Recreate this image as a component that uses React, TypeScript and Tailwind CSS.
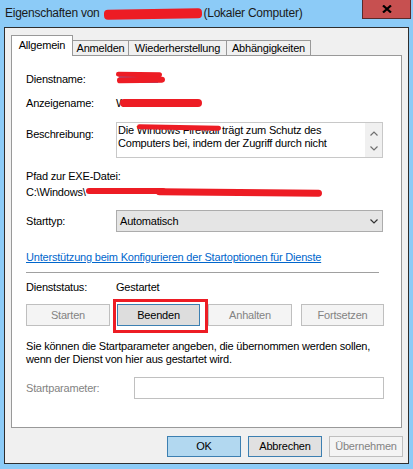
import React from 'react'

function Chevron({ up = false, className = '' }: { up?: boolean; className?: string }) {
  return (
    <svg width="8" height="5" viewBox="0 0 8 5" className={className}>
      <path d={up ? 'M0.5 4.5 L4 1 L7.5 4.5' : 'M0.5 0.5 L4 4 L7.5 0.5'} fill="none" stroke="currentColor" strokeWidth="1.2" />
    </svg>
  )
}

function Row({ label, children, className = '' }: { label: string; children?: React.ReactNode; className?: string }) {
  return (
    <div className={`flex items-center h-[16px] ${className}`}>
      <span className="w-[90px] shrink-0">{label}</span>
      {children}
    </div>
  )
}

export default function App() {
  return (
    <div className="w-[413px] h-[469px] bg-[#8ccbf7] overflow-hidden font-['Liberation_Sans',Arial,sans-serif] text-[11px] tracking-[-0.2px] leading-[13px] text-black">
      {/* Title bar */}
      <div className="flex h-[27px]">
        <div className="flex items-center h-[27px] pl-[5px] text-[12px] tracking-[-0.25px] text-[#1a1a1a]">
          <span>Eigenschaften von</span>
          <span className="relative inline-block w-[101px] h-[14px] ml-[3px]">
            <span className="absolute left-[1px] top-[2px] w-[98px] h-[10px] bg-[#ed1c24] rounded-[4px] -rotate-1" />
          </span>
          <span>(Lokaler Computer)</span>
        </div>
        <button className="ml-auto mr-[2px] w-[49px] h-[19px] bg-[#c75050] border border-[#5a2a2a] border-t-0 flex items-center justify-center">
          <svg width="10" height="8" viewBox="0 0 10 8">
            <path d="M1 0.5 L9 7.5 M9 0.5 L1 7.5" stroke="#000" strokeWidth="2.2" />
          </svg>
        </button>
      </div>

      {/* Client area */}
      <div className="mx-[4px] h-[437px] border border-[#2e2e2e] bg-[#f0f0f0] pl-[6px] pt-[7px]">
        {/* Tabs */}
        <div className="flex items-end h-[20px]">
          <div className="relative z-10 mb-[-1px] h-[21px] w-[62px] bg-white border border-b-0 border-[#999] flex items-center justify-center pb-[1px]">
            Allgemein
          </div>
          <div className="h-[15px] w-[57px] -ml-px border border-b-0 border-[#999] flex items-center justify-center pt-[1px]">
            Anmelden
          </div>
          <div className="h-[15px] w-[99px] -ml-px border border-b-0 border-[#999] flex items-center justify-center pt-[1px]">
            Wiederherstellung
          </div>
          <div className="h-[15px] w-[85px] -ml-px border border-b-0 border-[#999] flex items-center justify-center pt-[1px]">
            Abhängigkeiten
          </div>
        </div>

        {/* Tab pane */}
        <div className="w-[391px] h-[373px] bg-white border border-[#999] pl-[14px] flex flex-col">
          <Row label="Dienstname:" className="mt-[15px]">
            <span className="relative inline-block w-[50px] h-[16px]">
              <span className="absolute left-[3px] top-[3px] w-[39px] h-[9px] bg-[#3399ff]" />
              <span className="absolute left-[0px] top-[1px] w-[46px] h-[5px] bg-[#ed1c24] rounded-full rotate-1" />
              <span className="absolute left-[1px] top-[6px] w-[48px] h-[6px] bg-[#ed1c24] rounded-full -rotate-1" />
            </span>
          </Row>
          <Row label="Anzeigename:" className="mt-[8px]">
            <span className="relative inline-block w-[90px] h-[16px]">
              <span className="absolute left-0 top-[2px]">W</span>
              <span className="absolute left-[4px] top-[4px] w-[82px] h-[8px] bg-[#ed1c24] rounded-[4px]" />
            </span>
          </Row>

          <div className="flex items-start mt-[11px]">
            <span className="w-[90px] shrink-0 mt-[6px]">Beschreibung:</span>
            <div className="relative w-[267px] h-[36px] border border-[#c8c8c8] flex">
              <div className="flex-1 pl-[1px] pt-[1px]">
                <div className="relative">
                  Die Windows Firewall trägt zum Schutz des
                  <span className="absolute left-[19px] top-[1px] w-[84px] h-[5px] bg-[#ed1c24] rounded-full rotate-1" />
                </div>
                <div>Computers bei, indem der Zugriff durch nicht</div>
              </div>
              <div className="w-[17px] bg-[#f0f0f0] flex flex-col items-center justify-between pt-[8px] pb-[6px] text-[#707070]">
                <Chevron up />
                <Chevron />
              </div>
            </div>
          </div>

          <div className="mt-[10px] h-[16px] flex items-center">Pfad zur EXE-Datei:</div>
          <div className="flex items-center h-[16px]">
            <span>C:\Windows\</span>
            <span className="relative inline-block w-[240px] h-[16px]">
              <span className="absolute left-0 top-[4px] w-[80px] h-[6px] bg-[#ed1c24] rounded-full" />
              <span className="absolute left-[70px] top-[5px] w-[166px] h-[7px] bg-[#ed1c24] rounded-full rotate-[0.5deg]" />
            </span>
          </div>

          <div className="flex items-center mt-[10px]">
            <span className="w-[90px] shrink-0">Starttyp:</span>
            <div className="w-[267px] h-[22px] bg-[#e5e5e5] border border-[#acacac] flex items-center pl-[3px] pr-[4px]">
              <span className="flex-1">Automatisch</span>
              <Chevron className="text-[#333]" />
            </div>
          </div>

          <div className="mt-[17px] h-[16px] flex items-center">
            <span className="text-[#0066cc] underline">Unterstützung beim Konfigurieren der Startoptionen für Dienste</span>
          </div>

          <div className="mt-[7px] w-[353px] h-px bg-[#a0a0a0]" />

          <Row label="Dienststatus:" className="mt-[6px]">
            <span>Gestartet</span>
          </Row>

          <div className="flex mt-[9px] h-[22px]">
            <button disabled className="w-[84px] h-[22px] border border-[#bfbfbf] bg-[#f4f4f4] text-[#838383]">Starten</button>
            <div className="relative ml-[7px]">
              <button className="w-[83px] h-[22px] border border-[#3c7fb1] bg-[#dddddd]">Beenden</button>
              <span className="absolute left-[-4px] right-[-8px] top-[-5px] bottom-[-7px] border-[3px] border-[#ed1c24] pointer-events-none" />
            </div>
            <button disabled className="ml-[8px] w-[84px] h-[22px] border border-[#bfbfbf] bg-[#f4f4f4] text-[#838383]">Anhalten</button>
            <button disabled className="ml-[9px] w-[83px] h-[22px] border border-[#bfbfbf] bg-[#f4f4f4] text-[#838383]">Fortsetzen</button>
          </div>

          <p className="mt-[14px] whitespace-nowrap">
            Sie können die Startparameter angeben, die übernommen werden sollen,
            <br />
            wenn der Dienst von hier aus gestartet wird.
          </p>

          <div className="flex items-center mt-[11px]">
            <span className="w-[108px] shrink-0 text-[#838383]">Startparameter:</span>
            <div className="w-[250px] h-[22px] border border-[#c0c0c0] bg-white" />
          </div>
        </div>

        {/* Dialog buttons */}
        <div className="w-[392px] mt-[8px] flex justify-end gap-[7px]">
          <button className="w-[74px] h-[21px] border border-[#3c7fb1] bg-[#b2d8f0]">OK</button>
          <button className="w-[74px] h-[21px] border border-[#3c7fb1] bg-[#e1e1e1]">Abbrechen</button>
          <button disabled className="w-[74px] h-[21px] border border-[#bfbfbf] bg-[#f4f4f4] text-[#838383]">Übernehmen</button>
        </div>
      </div>
    </div>
  )
}
